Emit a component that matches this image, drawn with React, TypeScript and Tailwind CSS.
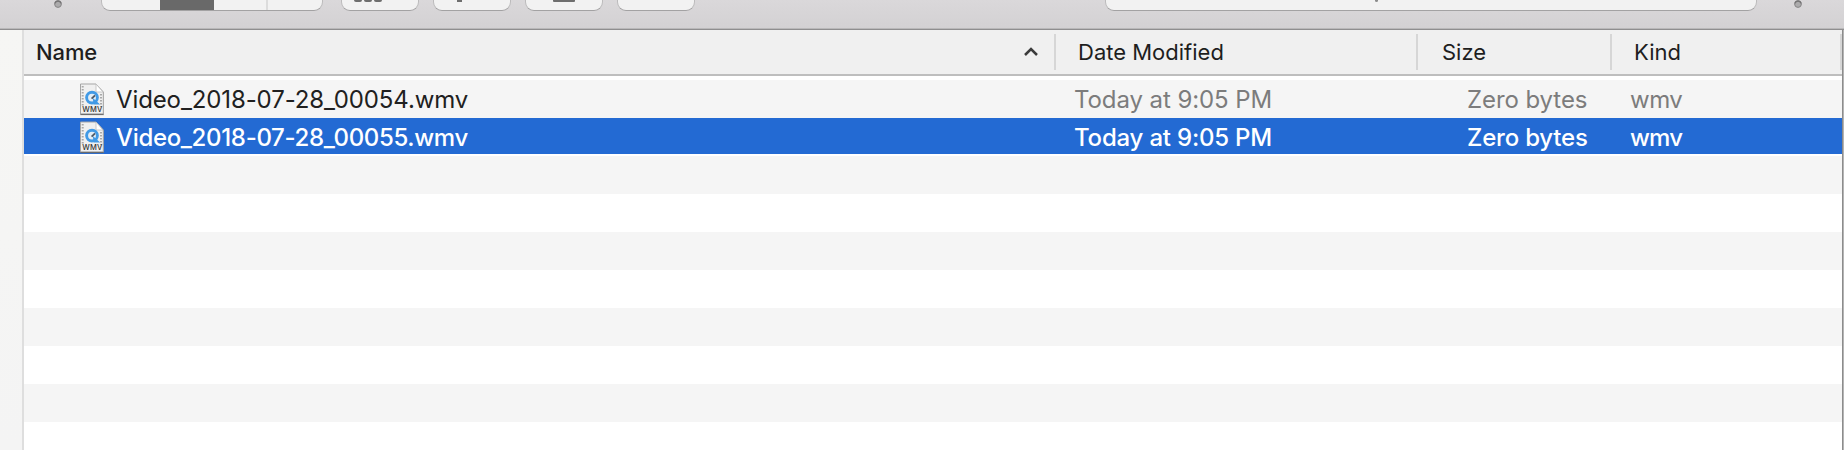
type FileEntry = { name: string; selected: boolean };

const files: FileEntry[] = [
  { name: "Video_2018-07-28_00054.wmv", selected: false },
  { name: "Video_2018-07-28_00055.wmv", selected: true },
];

function WmvIcon() {
  return (
    <svg width="26" height="34" viewBox="0 0 26 34" className="block shrink-0">
      <path d="M1.5 1.5H17L25 9.5V32.2H1.5Z" fill="#888" opacity=".5" />
      <path d="M1.5 1H17L24.3 9V31H1.5Z" fill="#f0f0f0" stroke="#a5a5a5" strokeWidth="1" />
      <path d="M3.7 3V24M22 11V24" stroke="#a8a8a8" strokeWidth="2" strokeDasharray="1.5 1.5" />
      <path d="M17 1V9H24Z" fill="#fff" stroke="#bcbcbc" strokeWidth=".8" />
      <path d="M1.5 31.4H24.5" stroke="#666" strokeWidth="1" />
      <circle cx="13" cy="14.6" r="5.4" fill="#e2edf6" stroke="#419ae6" strokeWidth="2.9" />
      <path d="M14.6 16.5L19.6 21H15.2Z" fill="#419ae6" stroke="#419ae6" strokeWidth="1.2" />
      <path d="M12.6 15.6L16 12.4" stroke="#4d5966" strokeWidth="1.9" />
      <text x="13.4" y="29" textAnchor="middle" fontFamily="Inter, sans-serif" fontSize="7.5" fontWeight="500" letterSpacing=".15" fill="#333">WMV</text>
    </svg>
  );
}

function Dot() {
  return (
    <svg width="8" height="8" viewBox="0 0 8 8" className="block shrink-0">
      <circle cx="4" cy="4" r="3.4" fill="#acabac" stroke="#868586" strokeWidth="1" />
      <path d="M1 3.4A3.1 3.1 0 0 1 7 3.4" fill="none" stroke="#747374" strokeWidth="1.2" />
    </svg>
  );
}

const control =
  "h-[11px] shrink-0 overflow-hidden rounded-b-[9px] border border-t-0 border-[#bcbbbc] border-b-[#a3a2a3] bg-[#f2f2f2]";

function Toolbar() {
  return (
    <div className="flex h-[30px] items-start border-b border-[#8f8e8f] bg-linear-to-b from-[#dad8da] to-[#d3d1d3] shadow-[inset_0_-1px_0_#b9b8b9]">
      <div className="ml-[54px]"><Dot /></div>
      <div className={`${control} ml-[39px] flex w-[222px]`}>
        <div className="w-[58px]" />
        <div className="h-[11px] w-[54px] bg-[#696969]" />
        <div className="w-[52px]" />
        <div className="w-[2px] bg-[#dcdcdc]" />
      </div>
      <div className={`${control} ml-[18px] flex w-[78px] gap-[2px] pl-[12px]`}>
        <div className="h-[2px] w-[8px] rounded-b-[2px] bg-[#6e6e6e]" />
        <div className="h-[2px] w-[8px] rounded-b-[2px] bg-[#6e6e6e]" />
        <div className="h-[2px] w-[8px] rounded-b-[2px] bg-[#6e6e6e]" />
      </div>
      <div className={`${control} ml-[14px] w-[78px] pl-[23px]`}>
        <div className="h-[2px] w-[5px] bg-[#6e6e6e]" />
      </div>
      <div className={`${control} ml-[14px] w-[78px] pl-[27px]`}>
        <div className="h-[2px] w-[22px] rounded-b-[1px] bg-[#6e6e6e]" />
      </div>
      <div className={`${control} ml-[14px] w-[78px]`} />
      <div className={`${control} ml-[410px] w-[652px] pl-[269px]`}>
        <div className="h-[2px] w-[3px] rounded-b-[2px] bg-[#8c8c8c]" />
      </div>
      <div className="ml-[37px]"><Dot /></div>
    </div>
  );
}

function Header() {
  return (
    <div className="flex h-[46px] items-start border-b-2 border-[#bebebe] bg-[#f0f0f0] pt-1 text-[22px] leading-[36px] text-[#1e1e1e]">
      <div className="flex h-[36px] w-[1032px] items-center border-r-2 border-[#d6d6d6] pl-[12px]">
        <span className="font-medium tracking-[-0.1px]">Name</span>
        <svg width="16" height="10" viewBox="0 0 16 10" className="mr-[15px] ml-auto block">
          <path d="M2 8L8 2L14 8" fill="none" stroke="#3b3b3b" strokeWidth="2.5" />
        </svg>
      </div>
      <div className="h-[36px] w-[362px] border-r-2 border-[#d6d6d6] pl-[22px]">Date Modified</div>
      <div className="h-[36px] w-[194px] border-r-2 border-[#d6d6d6] pl-[24px]">Size</div>
      <div className="h-[36px] w-[230px] border-r-2 border-[#d6d6d6] pl-[22px]">Kind</div>
    </div>
  );
}

function FileRow({ name, selected }: FileEntry) {
  return (
    <div
      className={
        selected
          ? "flex h-[38px] border-b-2 border-white bg-[#236ad3] text-[24px] leading-[40px] font-medium tracking-[-0.2px] text-white"
          : "flex h-[38px] bg-[#f5f5f5] text-[24px] leading-[40px] tracking-[-0.08px] text-[#7c7c7c]"
      }
    >
      <div className="flex w-[1050px] pl-[55px]">
        <div className="pt-[3px]"><WmvIcon /></div>
        <span className={selected ? "ml-[11px] tracking-[-0.33px]" : "ml-[11px] tracking-[-0.11px] text-[#202020]"}>{name}</span>
      </div>
      <div className="w-[393px]">Today at 9:05 PM</div>
      <div className="w-[163px]">Zero bytes</div>
      <div className={selected ? "tracking-[-0.8px]" : "tracking-[-0.5px]"}>wmv</div>
    </div>
  );
}

export default function App() {
  return (
    <div className="flex h-[450px] w-[1844px] flex-col overflow-hidden bg-white font-['Inter',sans-serif]">
      <Toolbar />
      <div className="flex flex-1">
        <div className="w-[24px] border-r-2 border-[#dedede] bg-linear-to-b from-[#f6f6f4] to-[#f4f4f4]" />
        <div className="w-[1818px]">
          <Header />
          <div className="pt-1">
            {files.map((f) => <FileRow key={f.name} {...f} />)}
            <div className="h-[38px] bg-[#f5f5f5]" />
            <div className="h-[38px] bg-white" />
            <div className="h-[38px] bg-[#f5f5f5]" />
            <div className="h-[38px] bg-white" />
            <div className="h-[38px] bg-[#f5f5f5]" />
            <div className="h-[38px] bg-white" />
            <div className="h-[38px] bg-[#f5f5f5]" />
          </div>
        </div>
        <div className="w-[2px] border-l border-[#8c8c8c] bg-[#b4b4b4]" />
      </div>
    </div>
  );
}
